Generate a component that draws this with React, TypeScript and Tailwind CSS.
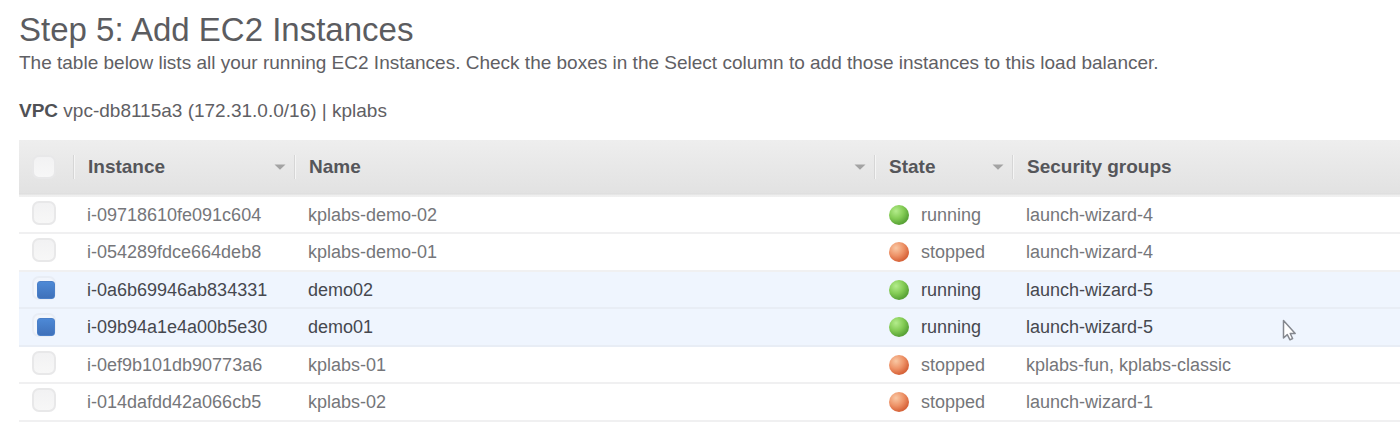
import { useState } from "react";
import clsx from "clsx";

type State = "running" | "stopped";

interface Instance {
  id: string;
  name: string;
  state: State;
  groups: string;
}

const instances: Instance[] = [
  { id: "i-09718610fe091c604", name: "kplabs-demo-02", state: "running", groups: "launch-wizard-4" },
  { id: "i-054289fdce664deb8", name: "kplabs-demo-01", state: "stopped", groups: "launch-wizard-4" },
  { id: "i-0a6b69946ab834331", name: "demo02", state: "running", groups: "launch-wizard-5" },
  { id: "i-09b94a1e4a00b5e30", name: "demo01", state: "running", groups: "launch-wizard-5" },
  { id: "i-0ef9b101db90773a6", name: "kplabs-01", state: "stopped", groups: "kplabs-fun, kplabs-classic" },
  { id: "i-014dafdd42a066cb5", name: "kplabs-02", state: "stopped", groups: "launch-wizard-1" },
];

function Checkbox({ label, checked, onChange }: { label: string; checked: boolean; onChange: () => void }) {
  return (
    <input
      type="checkbox"
      aria-label={label}
      checked={checked}
      onChange={onChange}
      className="block size-6 appearance-none rounded-[7px] border-2 border-[#e8e8e9] bg-linear-to-b from-[#f2f2f3] to-[#f7f7f7] pt-[3px] pl-[3px] checked:border-[#e8edf5] checked:from-[#f1f5fc] checked:to-[#f4f8fe] checked:before:block checked:before:size-[18px] checked:before:rounded-[3px] checked:before:border checked:before:border-[#4a7fc8] checked:before:bg-linear-to-b checked:before:from-[#4d89d6] checked:before:to-[#3f71ba] checked:before:content-['']"
    />
  );
}

function StatusDot({ state }: { state: State }) {
  return (
    <span
      className={clsx(
        "size-5 shrink-0 rounded-full",
        state === "running"
          ? "bg-[radial-gradient(circle_at_35%_30%,#b4ec8c_0%,#84cc55_40%,#5ba538_70%,#4d8f33_100%)]"
          : "bg-[radial-gradient(circle_at_35%_30%,#f9c8a4_0%,#ee9469_40%,#d9663c_70%,#b9532f_100%)]",
      )}
    />
  );
}

function HeaderCell({ title, sortable = false }: { title: string; sortable?: boolean }) {
  return (
    <th scope="col" className="p-0 pb-1 text-left font-bold">
      <div className="flex h-6 items-center justify-between border-l border-[#d6d6d6] pr-2 pl-3.5 shadow-[inset_1px_0_0_#f5f5f5]">
        {title}
        {sortable && (
          <button type="button" aria-label={`Sort by ${title}`} className="flex h-6 items-center">
            <svg width="12" height="6" viewBox="0 0 12 6" fill="#a3a3a3">
              <path d="M0.5 0.5h11L6 5.8z" />
            </svg>
          </button>
        )}
      </div>
    </th>
  );
}

export default function App() {
  const [selected, setSelected] = useState<string[]>(["i-0a6b69946ab834331", "i-09b94a1e4a00b5e30"]);
  const allSelected = selected.length === instances.length;
  const toggle = (id: string) =>
    setSelected((current) => (current.includes(id) ? current.filter((item) => item !== id) : [...current, id]));

  return (
    <main className="relative min-h-screen bg-white pt-2.5 pl-[19px] font-['Liberation_Sans',Arial,sans-serif] text-[#5f6064]">
      <h1 className="text-[33px] leading-10 text-[#5b5c60]">Step 5: Add EC2 Instances</h1>
      <p className="text-[19px] leading-[26px]">
        The table below lists all your running EC2 Instances. Check the boxes in the Select column to add those
        instances to this load balancer.
      </p>
      <p className="mt-[22px] text-[19px] leading-[26px]">
        <strong className="text-[#505155]">VPC</strong> vpc-db8115a3 (172.31.0.0/16) | kplabs
      </p>

      <table className="mt-4 w-full table-fixed border-separate border-spacing-0">
        <colgroup>
          <col className="w-[54px]" />
          <col className="w-[221px]" />
          <col className="w-[580px]" />
          <col className="w-[138px]" />
          <col />
        </colgroup>
        <thead className="text-[19px] leading-6 text-[#55565a]">
          <tr className="h-[57px] bg-[linear-gradient(to_bottom,#eeeeee_0,#e2e2e2_53px,#dcdcdc_54px,#efefef_55px,#f0f0f0_57px)]">
            <th scope="col" className="p-0 pb-1 pl-[13px]">
              <Checkbox
                label="Select all instances"
                checked={allSelected}
                onChange={() => setSelected(allSelected ? [] : instances.map((instance) => instance.id))}
              />
            </th>
            <HeaderCell title="Instance" sortable />
            <HeaderCell title="Name" sortable />
            <HeaderCell title="State" sortable />
            <HeaderCell title="Security groups" />
          </tr>
        </thead>
        <tbody className="text-[18px] leading-6">
          {instances.map(({ id, name, state, groups }) => {
            const isSelected = selected.includes(id);
            return (
              <tr
                key={id}
                className={clsx(
                  "h-[37px] even:h-[38px] *:border-b-2 *:p-0",
                  isSelected
                    ? "bg-[#eff5fe] text-[#46484f] *:border-[#e8edf5]"
                    : "text-[#75767a] *:border-[#f0f0f1]",
                )}
              >
                <td>
                  <div className="pb-1 pl-[13px]">
                    <Checkbox label={`Select ${id}`} checked={isSelected} onChange={() => toggle(id)} />
                  </div>
                </td>
                <td>
                  <div className="pl-3.5">{id}</div>
                </td>
                <td>
                  <div className="pl-3.5">{name}</div>
                </td>
                <td>
                  <div className="flex items-center gap-3 pl-[15px]">
                    <StatusDot state={state} />
                    {state}
                  </div>
                </td>
                <td>
                  <div className="pl-3.5">{groups}</div>
                </td>
              </tr>
            );
          })}
        </tbody>
      </table>

      <svg
        className="pointer-events-none absolute top-[319px] left-[1282px]"
        width="16"
        height="23"
        viewBox="0 0 16 23"
        fill="#fff"
        stroke="#85888f"
        strokeWidth="1.5"
        strokeLinejoin="round"
        aria-hidden="true"
      >
        <path d="M1.5 1.5v17.5l3.8-3.4 2.7 5.2 2.6-1.3-2.4-5h5z" />
      </svg>
    </main>
  );
}
